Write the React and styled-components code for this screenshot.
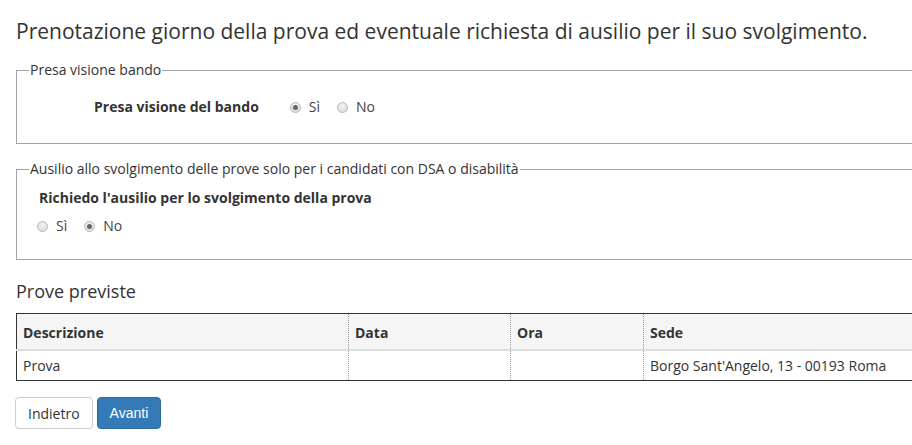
import React from "react";
import styled, { createGlobalStyle } from "styled-components";

const Global = createGlobalStyle`
  html, body { margin: 0; padding: 0; background: #fff; overflow: hidden; }
  body { font-family: "Open Sans", "DejaVu Sans", sans-serif; color: #333; font-size: 14px; }
`;

const Page = styled.div`
  width: 1000px;
  padding: 20px 0 0 16px;
`;

const Title = styled.h1`
  margin: 0 0 18px;
  font-size: 21px;
  line-height: 22px;
  font-weight: 400;
  color: #333;
`;

const Fieldset = styled.fieldset`
  margin: 0 0 ${(p) => p.$mb || 0}px;
  padding: 0 12px ${(p) => p.$pb}px;
  border: 1px solid #a3a3a3;
  min-width: 0;
`;

const Legend = styled.legend`
  padding: 0 1px;
  font-size: 14px;
  line-height: 20px;
  color: #333;
`;

const InlineRow = styled.div`
  display: flex;
  align-items: center;
  height: 20px;
  margin-top: ${(p) => p.$mt || 0}px;
  padding-left: ${(p) => p.$pl || 0}px;
`;

const Label = styled.div`
  font-weight: 700;
  font-size: 14px;
  line-height: 20px;
  margin-right: ${(p) => p.$mr || 0}px;
`;

const RadioOpt = styled.label`
  display: inline-flex;
  align-items: center;
  gap: 8px;
  margin-right: 17px;
  font-size: 14px;
  line-height: 20px;
  color: #444;
`;

const Circle = styled.span`
  position: relative;
  width: 11px;
  height: 11px;
  box-sizing: border-box;
  border-radius: 50%;
  border: 1px solid #b8b8b8;
  background: radial-gradient(circle at 50% 35%, #f4f4f4, #d6d6d6);
  &::after {
    content: "";
    display: ${(p) => (p.$on ? "block" : "none")};
    position: absolute;
    left: 2px;
    top: 2px;
    width: 5px;
    height: 5px;
    border-radius: 50%;
    background: #666;
  }
`;

const SubTitle = styled.h2`
  margin: 21px 0 12px;
  font-size: 18px;
  line-height: 20px;
  font-weight: 400;
  color: #333;
`;

const Table = styled.table`
  border-collapse: collapse;
  border: 1px solid #333;
  table-layout: fixed;
  width: 1000px;
`;

const Th = styled.th`
  box-sizing: border-box;
  width: ${(p) => (p.$w ? `${p.$w}px` : "auto")};
  padding: 9px 6px 6px;
  line-height: 20px;
  vertical-align: bottom;
  text-align: left;
  font-weight: 700;
  font-size: 14px;
  background: #f5f5f5;
  border-bottom: 2px solid #ddd;
  border-left: 1px dotted #999;
  &:first-child { border-left: none; }
`;

const Td = styled.td`
  padding: 5px 6px 4px;
  line-height: 20px;
  font-size: 14px;
  color: #333;
  white-space: nowrap;
  border-left: 1px dotted #999;
  &:first-child { border-left: none; }
`;

const Buttons = styled.div`
  display: flex;
  gap: 4px;
  margin: 16px 0 0 -1px;
`;

const Button = styled.button`
  height: 32px;
  padding: 0 12px;
  border-radius: 4px;
  font-size: 14px;
  border: 1px solid ${(p) => (p.$primary ? "#2e6da4" : "#ccc")};
  background: ${(p) => (p.$primary ? "#337ab7" : "#fff")};
  color: ${(p) => (p.$primary ? "#fff" : "#333")};
  font-family: ${(p) => (p.$primary ? '"Liberation Sans", Arial, sans-serif' : '"Open Sans", sans-serif')};
`;

const Radio = ({ on, children }) => (
  <RadioOpt>
    <Circle $on={on} />
    {children}
  </RadioOpt>
);

export default function App() {
  return (
    <Page>
      <Global />
      <Title>Prenotazione giorno della prova ed eventuale richiesta di ausilio per il suo svolgimento.</Title>
      <Fieldset $mb={15} $pb={26}>
        <Legend>Presa visione bando</Legend>
        <InlineRow $mt={17} $pl={65}>
          <Label $mr={31}>Presa visione del bando</Label>
          <Radio on>Sì</Radio>
          <Radio>No</Radio>
        </InlineRow>
      </Fieldset>
      <Fieldset $pb={23}>
        <Legend>Ausilio allo svolgimento delle prove solo per i candidati con DSA o disabilità</Legend>
        <InlineRow $mt={9} $pl={10}>
          <Label>Richiedo l'ausilio per lo svolgimento della prova</Label>
        </InlineRow>
        <InlineRow $mt={8} $pl={8}>
          <Radio>Sì</Radio>
          <Radio on>No</Radio>
        </InlineRow>
      </Fieldset>
      <SubTitle>Prove previste</SubTitle>
      <Table>
        <thead>
          <tr>
            <Th $w={332}>Descrizione</Th>
            <Th $w={162}>Data</Th>
            <Th $w={133}>Ora</Th>
            <Th>Sede</Th>
          </tr>
        </thead>
        <tbody>
          <tr>
            <Td>Prova</Td>
            <Td></Td>
            <Td></Td>
            <Td>Borgo Sant'Angelo, 13 - 00193 Roma</Td>
          </tr>
        </tbody>
      </Table>
      <Buttons>
        <Button>Indietro</Button>
        <Button $primary>Avanti</Button>
      </Buttons>
    </Page>
  );
}
